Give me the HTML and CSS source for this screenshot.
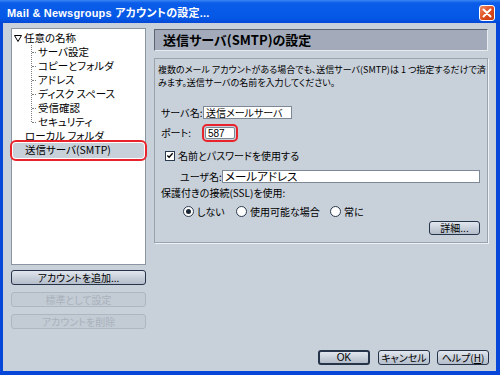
FILE: index.html
```html
<!DOCTYPE html>
<html lang="ja">
<head>
    <meta charset="UTF-8">
    <title>Mail &amp; Newsgroups アカウントの設定...</title>
    <link rel="stylesheet" href="styles.css">
</head>
<body>
    <div class="window">
        <div class="titlebar">
            <span class="title">Mail &amp; Newsgroups アカウントの設定...</span>
            <span class="close">
                <svg width="10" height="10" viewBox="0 0 10 10"><path d="M1.5 1.5 L8.5 8.5 M8.5 1.5 L1.5 8.5" stroke="#fff" stroke-width="2" stroke-linecap="round"/></svg>
            </span>
        </div>

        <div class="client">
            <div class="side">
                <div class="tree">
                    <div class="node root">
                        <svg class="twisty" width="8" height="7" viewBox="0 0 8 7"><path d="M0.5 0.5 H7.5 L4 6.5 Z" fill="#fff" stroke="#000" stroke-width="1"/></svg>
                        任意の名称
                    </div>
                    <ul class="children">
                        <li>サーバ設定</li>
                        <li>コピーとフォルダ</li>
                        <li>アドレス</li>
                        <li>ディスク スペース</li>
                        <li>受信確認</li>
                        <li>セキュリティ</li>
                    </ul>
                    <div class="node top">ローカル フォルダ</div>
                    <div class="node top selected">送信サーバ(SMTP)</div>
                </div>
                <button class="btn side-btn">アカウントを追加...</button>
                <button class="btn side-btn" disabled>標準として設定</button>
                <button class="btn side-btn" disabled>アカウントを削除</button>
            </div>

            <div class="main">
                <div class="panel-head">送信サーバ(SMTP)の設定</div>
                <div class="group">
                    <p class="desc">複数のメール アカウントがある場合でも、送信サーバ(SMTP)は 1 つ指定するだけで済<br>みます。送信サーバの名前を入力してください。</p>

                    <div class="row row-server">
                        <label class="lbl">サーバ名:</label>
                        <span class="field field-server">送信メールサーバ</span>
                    </div>
                    <div class="row row-port">
                        <label class="lbl">ポート:</label>
                        <span class="field field-port">587</span>
                    </div>
                    <div class="row row-check">
                        <span class="checkbox">
                            <svg width="9" height="9" viewBox="0 0 9 9"><path d="M1.5 4.5 L3.5 6.5 L7.5 2" fill="none" stroke="#000" stroke-width="1.5"/></svg>
                        </span>
                        <span>名前とパスワードを使用する</span>
                    </div>
                    <div class="row row-user">
                        <label class="lbl">ユーザ名:</label>
                        <span class="field field-user">メールアドレス</span>
                    </div>
                    <div class="row row-ssl">保護付きの接続(SSL)を使用:</div>
                    <div class="row row-radios">
                        <span class="opt opt-1"><span class="radio on"></span>しない</span>
                        <span class="opt opt-2"><span class="radio"></span>使用可能な場合</span>
                        <span class="opt"><span class="radio"></span>常に</span>
                    </div>
                    <div class="adv-row">
                        <button class="btn adv-btn">詳細...</button>
                    </div>
                </div>

                <div class="footer">
                    <button class="btn foot-btn default">OK</button>
                    <button class="btn foot-btn">キャンセル</button>
                    <button class="btn foot-btn">ヘルプ(<u>H</u>)</button>
                </div>
            </div>
        </div>
    </div>
</body>
</html>
```

FILE: styles.css
```css
* {
    box-sizing: border-box;
}

body {
    margin: 0;
    width: 500px;
    height: 375px;
    overflow: hidden;
    font-family: "Noto Sans CJK JP", "Liberation Sans", sans-serif;
    font-size: 10px;
    font-feature-settings: "palt";
    color: #000;
}

.window {
    width: 500px;
    height: 375px;
    background: #0646d8;
    padding: 0 4px 4px 3px;
    display: flex;
    flex-direction: column;
}

/* title bar */

.titlebar {
    height: 23px;
    margin: 0 -4px 0 -3px;
    padding: 0 5px 0 7px;
    display: flex;
    align-items: center;
    justify-content: space-between;
    background: linear-gradient(#3a86f4 0, #0a5ce9 3px, #0558e6 18px, #0448d6 23px);
}

.title {
    color: #fff;
    font-family: "Liberation Sans", "Noto Sans CJK JP", sans-serif;
    font-weight: bold;
    font-size: 11px;
    letter-spacing: 0.2px;
}

.close {
    width: 16px;
    height: 16px;
    border: 1px solid #fff;
    border-radius: 3px;
    background: linear-gradient(135deg, #f08a66, #dd4a1c 55%, #c63a10);
    display: flex;
    align-items: center;
    justify-content: center;
    margin-top: 2px;
}

/* client area */

.client {
    flex: 1;
    background: #c8d0da;
    display: flex;
    gap: 8px;
    padding: 5px 7px 6px 8px;
}

.side {
    width: 135px;
    display: flex;
    flex-direction: column;
}

.tree {
    height: 237px;
    background: #fff;
    border: 1px solid #8c96a2;
    padding-top: 2px;
    line-height: 14px;
    font-size: 10.5px;
}

.node {
    height: 14px;
    white-space: nowrap;
}

.root {
    padding-left: 2px;
    display: flex;
    align-items: center;
    gap: 2px;
}

.children {
    list-style: none;
    margin: 0 0 0 19px;
    padding: 0;
    border-left: 1px dotted #808080;
    height: 77px;
}

.children li {
    height: 14px;
    display: flex;
    align-items: center;
    white-space: nowrap;
}

.children li::before {
    content: "";
    width: 4px;
    border-top: 1px dotted #808080;
    margin-right: 2px;
}

.top {
    padding-left: 13px;
}

.children + .top {
    margin-top: 7px;
}

.selected {
    height: 15px;
    margin: 0 1px;
    padding-left: 12px;
    background: #c8d0da;
    border-radius: 3px;
    outline: 2px solid #e8232b;
    outline-offset: 1px;
}

/* buttons */

.btn {
    font-family: inherit;
    font-size: 10px;
    font-feature-settings: "palt";
    color: #000;
    height: 15px;
    padding: 0;
    line-height: 12px;
    border: 1px solid #26344a;
    border-radius: 3px;
    background: linear-gradient(#e2e7ee, #c4ccd7 60%, #b4bdc9);
}

.btn:disabled {
    color: #a9b1bb;
    border-color: #aeb6c0;
    background: #c3cbd5;
}

.side-btn {
    width: 135px;
    margin-top: 5px;
}

.side-btn + .side-btn {
    margin-top: 7px;
}

/* right panel */

.main {
    width: 334px;
    display: flex;
    flex-direction: column;
    padding-top: 1px;
}

.panel-head {
    height: 22px;
    background: #a3abba;
    border: 1px solid #5d6572;
    border-right-color: #e7ebf0;
    border-bottom-color: #e7ebf0;
    padding-left: 8px;
    font-size: 13px;
    line-height: 20px;
    font-weight: bold;
}

.group {
    margin-top: 7px;
    height: 185px;
    border: 1px solid #9aa2ad;
    box-shadow: 1px 1px 0 #eef1f5;
    padding: 4px 6px 0 6px;
    display: flex;
    flex-direction: column;
}

.desc {
    margin: 0 0 0 -3px;
    font-size: 9px;
    line-height: 13px;
    white-space: nowrap;
}

.row {
    display: flex;
    align-items: center;
    white-space: nowrap;
}

.lbl {
    width: 42px;
    flex-shrink: 0;
}

.field {
    flex-shrink: 0;
    background: #fff;
    border: 1px solid #7c8896;
    height: 13px;
    line-height: 11px;
    padding-left: 2px;
}

.row-server {
    margin-top: 16px;
}

.field-server {
    width: 89px;
}

.row-port {
    margin-top: 5px;
}

.field-port {
    width: 30px;
    height: 12px;
    margin-left: 2px;
    font-family: "Liberation Sans", sans-serif;
    outline: 2px solid #e8232b;
    outline-offset: 1px;
    border-radius: 2px;
}

.row-check {
    margin-top: 8px;
    padding-left: 4px;
    gap: 3px;
}

.checkbox {
    flex-shrink: 0;
    width: 10px;
    height: 10px;
    background: #fff;
    border: 1px solid #2a3a4e;
    display: flex;
    align-items: center;
    justify-content: center;
}

.row-user {
    margin-top: 6px;
    padding-left: 19px;
}

.field-user {
    width: 258px;
    height: 13px;
    font-size: 11.5px;
    line-height: 11px;
}

.row-ssl {
    margin-top: 1px;
}

.row-radios {
    margin-top: 4px;
    padding-left: 22px;
}

.opt {
    flex-shrink: 0;
    display: flex;
    align-items: center;
    gap: 3px;
}

.opt-1 {
    width: 53px;
}

.opt-2 {
    width: 94px;
}

.radio {
    flex-shrink: 0;
    width: 11px;
    height: 11px;
    border-radius: 50%;
    border: 1px solid #2a3a4e;
    background: #fff;
    display: flex;
    align-items: center;
    justify-content: center;
}

.radio.on::after {
    content: "";
    width: 5px;
    height: 5px;
    border-radius: 50%;
    background: #1a2636;
}

.adv-row {
    margin-top: auto;
    margin-bottom: 7px;
    display: flex;
    justify-content: flex-end;
    padding-right: 1px;
}

.adv-btn {
    width: 51px;
    height: 14px;
}

/* footer */

.footer {
    margin-top: auto;
    margin-right: -1px;
    display: flex;
    justify-content: flex-end;
    gap: 7px;
}

.foot-btn {
    width: 52px;
}

.foot-btn.default {
    border-width: 2px;
    margin-right: 1px;
    font-family: "Liberation Sans", sans-serif;
}

.foot-btn u {
    text-decoration: underline;
}
```
